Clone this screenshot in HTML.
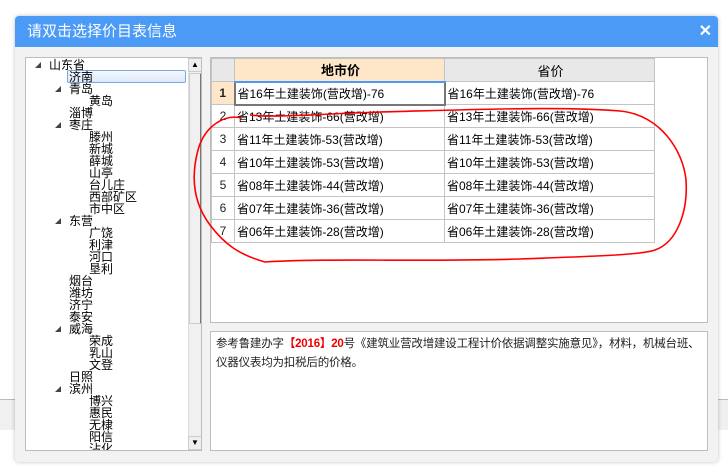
<!DOCTYPE html>
<html><head><meta charset="utf-8"><style>
*{margin:0;padding:0;box-sizing:border-box}
body{width:728px;height:474px;position:relative;background:#fff;font-family:"Liberation Sans","Noto Sans CJK SC","WenQuanYi Zen Hei",sans-serif;overflow:hidden}
.a{position:absolute}
.dlg{left:15px;top:16px;width:703px;height:446px;background:#f2f2f2;border-radius:4px;box-shadow:0 0 4px rgba(0,0,0,.25)}
.title{left:15px;top:16px;width:703px;height:31px;background:#4a9af6;border-radius:4px 4px 0 0;color:#fff;font-size:15px;line-height:31px;padding-left:12px}
.x{right:16px;top:16px;color:#fff;font-size:16px;font-weight:bold;line-height:31px}
.tree{left:25px;top:57px;width:177px;height:394px;background:#fff;border:1px solid #bdbdbd;overflow:hidden}
.ti{position:absolute;font-size:12px;line-height:12px;white-space:nowrap;color:#000}
.ar{position:absolute;width:0;height:0;border-left:6px solid transparent;border-bottom:6px solid #444}
.grid{left:210px;top:57px;width:498px;height:266px;background:#fff;border:1px solid #bdbdbd}
table{position:absolute;left:211px;top:58px;border-collapse:collapse;font-size:12px}
td{border:1px solid #c4c4c4;height:23px;padding:0 0 0 2px;white-space:nowrap}
td.n{width:23px;text-align:center;background:#fff;font-size:12px;padding:0;color:#222}
.notes{left:210px;top:331px;width:498px;height:120px;background:#fff;border:1px solid #bdbdbd;font-size:11.5px;line-height:19px;padding:3px 4px 3px 5px;color:#222;letter-spacing:-0.2px;white-space:nowrap;overflow:hidden}
</style></head><body>
<div class="a" style="left:0;top:399px;width:15px;height:1px;background:#bbb"></div>
<div class="a" style="left:0;top:400px;width:15px;height:30px;background:#f0f0f0"></div>
<div class="a" style="left:718px;top:399px;width:10px;height:1px;background:#bbb"></div>
<div class="a" style="left:718px;top:400px;width:10px;height:30px;background:#f0f0f0"></div>
<div class="a dlg"></div>
<div class="a title">请双击选择价目表信息</div>
<div class="a x">✕</div>
<div class="a tree">
<div class="ar" style="left:9px;top:4px"></div><div class="ti" style="left:23px;top:1px">山东省</div>
<div class="a" style="left:41px;top:12px;width:119px;height:13px;border:1px solid #7aa9e0;border-radius:2px;background:linear-gradient(#f4f8fe,#dce9fb)"></div>
<div class="ti" style="left:43px;top:13px">济南</div>
<div class="ar" style="left:29px;top:28px"></div><div class="ti" style="left:43px;top:25px">青岛</div>
<div class="ti" style="left:63px;top:37px">黄岛</div>
<div class="ti" style="left:43px;top:49px">淄博</div>
<div class="ar" style="left:29px;top:64px"></div><div class="ti" style="left:43px;top:61px">枣庄</div>
<div class="ti" style="left:63px;top:73px">滕州</div>
<div class="ti" style="left:63px;top:85px">新城</div>
<div class="ti" style="left:63px;top:97px">薛城</div>
<div class="ti" style="left:63px;top:109px">山亭</div>
<div class="ti" style="left:63px;top:121px">台儿庄</div>
<div class="ti" style="left:63px;top:133px">西部矿区</div>
<div class="ti" style="left:63px;top:145px">市中区</div>
<div class="ar" style="left:29px;top:160px"></div><div class="ti" style="left:43px;top:157px">东营</div>
<div class="ti" style="left:63px;top:169px">广饶</div>
<div class="ti" style="left:63px;top:181px">利津</div>
<div class="ti" style="left:63px;top:193px">河口</div>
<div class="ti" style="left:63px;top:205px">垦利</div>
<div class="ti" style="left:43px;top:217px">烟台</div>
<div class="ti" style="left:43px;top:229px">潍坊</div>
<div class="ti" style="left:43px;top:241px">济宁</div>
<div class="ti" style="left:43px;top:253px">泰安</div>
<div class="ar" style="left:29px;top:268px"></div><div class="ti" style="left:43px;top:265px">威海</div>
<div class="ti" style="left:63px;top:277px">荣成</div>
<div class="ti" style="left:63px;top:289px">乳山</div>
<div class="ti" style="left:63px;top:301px">文登</div>
<div class="ti" style="left:43px;top:313px">日照</div>
<div class="ar" style="left:29px;top:328px"></div><div class="ti" style="left:43px;top:325px">滨州</div>
<div class="ti" style="left:63px;top:337px">博兴</div>
<div class="ti" style="left:63px;top:349px">惠民</div>
<div class="ti" style="left:63px;top:361px">无棣</div>
<div class="ti" style="left:63px;top:373px">阳信</div>
<div class="ti" style="left:63px;top:385px">沾化</div>
<div class="a" style="left:162px;top:0;width:14px;height:392px;background:#f0f0f0;border-left:1px solid #ddd"></div>
<div class="a" style="left:162px;top:0;width:14px;height:14px;background:#eee;border:1px solid #ccc;font-size:8px;text-align:center;line-height:12px">▲</div>
<div class="a" style="left:163px;top:15px;width:13px;height:251px;background:#f0f0f0;border:1px solid #ccc;border-right:2px solid #777"></div>
<div class="a" style="left:162px;top:378px;width:14px;height:14px;background:#eee;border:1px solid #ccc;font-size:8px;text-align:center;line-height:12px">▼</div>
</div>
<div class="a grid"></div>
<table>
<tr><td class="n" style="background:#e8e8e8"></td><td style="width:210px;background:#fde7c8;text-align:center;font-weight:bold;font-size:13px;border-bottom:2px solid #4a9af6">地市价</td><td style="width:210px;background:#e8e8e8;text-align:center;font-size:13px">省价</td></tr>
<tr><td class="n" style="background:#fde7c8;font-weight:bold">1</td><td style="border:2px solid #777;border-top:1px solid #4a9af6">省16年土建装饰(营改增)-76</td><td>省16年土建装饰(营改增)-76</td></tr>
<tr><td class="n">2</td><td>省13年土建装饰-66(营改增)</td><td>省13年土建装饰-66(营改增)</td></tr>
<tr><td class="n">3</td><td>省11年土建装饰-53(营改增)</td><td>省11年土建装饰-53(营改增)</td></tr>
<tr><td class="n">4</td><td>省10年土建装饰-53(营改增)</td><td>省10年土建装饰-53(营改增)</td></tr>
<tr><td class="n">5</td><td>省08年土建装饰-44(营改增)</td><td>省08年土建装饰-44(营改增)</td></tr>
<tr><td class="n">6</td><td>省07年土建装饰-36(营改增)</td><td>省07年土建装饰-36(营改增)</td></tr>
<tr><td class="n">7</td><td>省06年土建装饰-28(营改增)</td><td>省06年土建装饰-28(营改增)</td></tr>
</table>
<svg class="a" style="left:0;top:0" width="728" height="474"><path d="M242 118 C225 114 205 125 198 150 C190 180 195 205 210 225 C225 245 240 255 265 262 C330 258 420 262 520 259 C600 256 640 255 655 250 C678 242 688 210 686 180 C683 150 660 115 620 111 C560 106 460 110 380 112 C320 114 270 118 250 115" fill="none" stroke="#f00" stroke-width="1.6"/></svg>
<div class="a notes">参考鲁建办字<b style="color:#e00">【2016】20</b>号《建筑业营改增建设工程计价依据调整实施意见》，材料，机械台班、<br>仪器仪表均为扣税后的价格。</div>
</body></html>
